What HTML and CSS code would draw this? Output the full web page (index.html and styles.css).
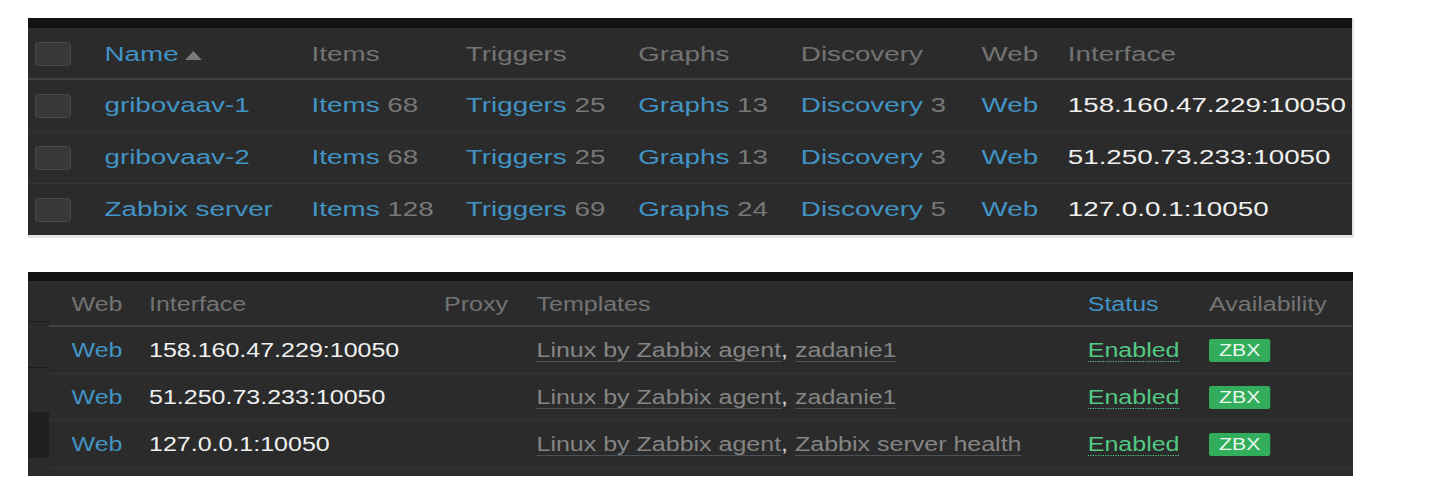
FILE: index.html
```html
<!DOCTYPE html>
<html lang="en">
<head>
    <meta charset="UTF-8">
    <meta name="viewport" content="width=device-width, initial-scale=1.0">
    <title>Hosts</title>
    <link rel="stylesheet" href="styles.css">
</head>
<body>
    <div class="page">
        <section class="panel panel-hosts">
            <div class="panel-bar"></div>
            <div class="hosts">
                <div class="row head">
                    <span><span class="checkbox"></span></span>
                    <span><a href="#" class="link">Name</a> <i class="arrow"></i></span>
                    <span>Items</span>
                    <span>Triggers</span>
                    <span>Graphs</span>
                    <span>Discovery</span>
                    <span>Web</span>
                    <span>Interface</span>
                </div>
                <div class="row">
                    <span><span class="checkbox"></span></span>
                    <span><a href="#" class="link">gribovaav-1</a></span>
                    <span><a href="#" class="link">Items</a> <span class="count">68</span></span>
                    <span><a href="#" class="link">Triggers</a> <span class="count">25</span></span>
                    <span><a href="#" class="link">Graphs</a> <span class="count">13</span></span>
                    <span><a href="#" class="link">Discovery</a> <span class="count">3</span></span>
                    <span><a href="#" class="link">Web</a></span>
                    <span class="addr">158.160.47.229:10050</span>
                </div>
                <div class="row">
                    <span><span class="checkbox"></span></span>
                    <span><a href="#" class="link">gribovaav-2</a></span>
                    <span><a href="#" class="link">Items</a> <span class="count">68</span></span>
                    <span><a href="#" class="link">Triggers</a> <span class="count">25</span></span>
                    <span><a href="#" class="link">Graphs</a> <span class="count">13</span></span>
                    <span><a href="#" class="link">Discovery</a> <span class="count">3</span></span>
                    <span><a href="#" class="link">Web</a></span>
                    <span class="addr">51.250.73.233:10050</span>
                </div>
                <div class="row">
                    <span><span class="checkbox"></span></span>
                    <span><a href="#" class="link">Zabbix server</a></span>
                    <span><a href="#" class="link">Items</a> <span class="count">128</span></span>
                    <span><a href="#" class="link">Triggers</a> <span class="count">69</span></span>
                    <span><a href="#" class="link">Graphs</a> <span class="count">24</span></span>
                    <span><a href="#" class="link">Discovery</a> <span class="count">5</span></span>
                    <span><a href="#" class="link">Web</a></span>
                    <span class="addr">127.0.0.1:10050</span>
                </div>
            </div>
        </section>

        <section class="panel panel-config">
            <div class="panel-bar"></div>
            <div class="config-body">
                <div class="edge">
                    <div class="edge-a"></div>
                    <div class="edge-line"></div>
                    <div class="edge-b"></div>
                    <div class="edge-line"></div>
                    <div class="edge-c"></div>
                    <div class="edge-block"></div>
                    <div class="edge-rest"></div>
                </div>
                <div class="config">
                    <div class="row head">
                        <span></span>
                        <span>Web</span>
                        <span>Interface</span>
                        <span>Proxy</span>
                        <span>Templates</span>
                        <span><a href="#" class="link">Status</a></span>
                        <span>Availability</span>
                    </div>
                    <div class="row">
                        <span></span>
                        <span><a href="#" class="link">Web</a></span>
                        <span class="addr">158.160.47.229:10050</span>
                        <span></span>
                        <span><a href="#" class="tpl">Linux by Zabbix agent</a><span class="comma">,</span> <a href="#" class="tpl">zadanie1</a></span>
                        <span><a href="#" class="enabled">Enabled</a></span>
                        <span><span class="badge">ZBX</span></span>
                    </div>
                    <div class="row">
                        <span></span>
                        <span><a href="#" class="link">Web</a></span>
                        <span class="addr">51.250.73.233:10050</span>
                        <span></span>
                        <span><a href="#" class="tpl">Linux by Zabbix agent</a><span class="comma">,</span> <a href="#" class="tpl">zadanie1</a></span>
                        <span><a href="#" class="enabled">Enabled</a></span>
                        <span><span class="badge">ZBX</span></span>
                    </div>
                    <div class="row">
                        <span></span>
                        <span><a href="#" class="link">Web</a></span>
                        <span class="addr">127.0.0.1:10050</span>
                        <span></span>
                        <span><a href="#" class="tpl">Linux by Zabbix agent</a><span class="comma">,</span> <a href="#" class="tpl">Zabbix server health</a></span>
                        <span><a href="#" class="enabled">Enabled</a></span>
                        <span><span class="badge">ZBX</span></span>
                    </div>
                </div>
            </div>
        </section>
    </div>
</body>
</html>
```

FILE: styles.css
```css
* {
    box-sizing: border-box;
}
body {
    margin: 0;
    background-color: #ffffff;
    font-family: "Liberation Sans", Arial, sans-serif;
    font-size: 20px;
}
.page {
    padding: 18px 0 0 28px;
}
.panel {
    background-color: #2b2b2b;
    overflow: hidden;
    color: #737373;
}
.panel-bar {
    height: 10px;
    background-color: #111214;
}
.panel-hosts {
    width: 1326px;
    border-right: 2px solid #dfe4e8;
    border-bottom: 3px solid #dfe4e8;
}
.panel-config {
    width: 1325px;
    margin-top: 34px;
}
.panel-config .panel-bar {
    height: 9px;
}

/* the screenshot is stretched sideways, so the tables are too */
.hosts {
    width: 953px;
    transform: scaleX(1.39);
    transform-origin: 0 0;
}
.config {
    flex: none;
    width: 1043px;
    padding-bottom: 8px;
    transform: scaleX(1.25);
    transform-origin: 0 0;
}
.row {
    display: grid;
    align-items: center;
    white-space: nowrap;
    border-bottom: 1px solid #363636;
}
.row.head {
    padding-top: 3px;
    border-bottom: 2px solid #414141;
}
.hosts .row {
    grid-template-columns: 55px 149px 111px 124px 117px 130px 62px 1fr;
    height: 52px;
}
.hosts .row:last-child {
    height: 51px;
    border-bottom: none;
}
.hosts .row.head .checkbox {
    margin-top: -2px;
}
.config .row {
    grid-template-columns: 18px 62px 236px 74px 441px 97px 1fr;
    height: 47px;
}
.config .row.head {
    height: 46px;
}

a {
    text-decoration: none;
}
.link {
    color: #4294c5;
}
.count {
    color: #787878;
}
.addr {
    color: #f0f0f0;
}
.arrow {
    display: inline-block;
    width: 0;
    height: 0;
    margin-left: -1px;
    border-left: 6.5px solid transparent;
    border-right: 6.5px solid transparent;
    border-bottom: 9px solid #7a7a7a;
    vertical-align: 1px;
}
.checkbox {
    display: block;
    width: 26px;
    height: 24px;
    margin-left: 5px;
    background-color: #383838;
    border: 1px solid #484848;
    border-radius: 3px;
}
.tpl {
    color: #858585;
    border-bottom: 1px solid #47525a;
}
.comma {
    color: #d6d6d6;
}
.enabled {
    color: #52c984;
    border-bottom: 1px dotted #52c984;
}
.badge {
    display: inline-block;
    padding: 0 8px;
    height: 23px;
    line-height: 23px;
    font-size: 17px;
    color: #e9f6ee;
    background-color: #31ad5b;
    border-radius: 2px;
}

.config-body {
    display: flex;
}
.edge {
    flex: none;
    width: 21px;
    display: flex;
    flex-direction: column;
}
.edge-a {
    height: 40px;
}
.edge-b {
    height: 45px;
}
.edge-c {
    height: 44px;
}
.edge-line {
    height: 1px;
    background-color: #1b1b1b;
}
.edge-block {
    height: 46px;
    background-color: #1f1f1f;
}
.edge-rest {
    flex: 1;
}
```
